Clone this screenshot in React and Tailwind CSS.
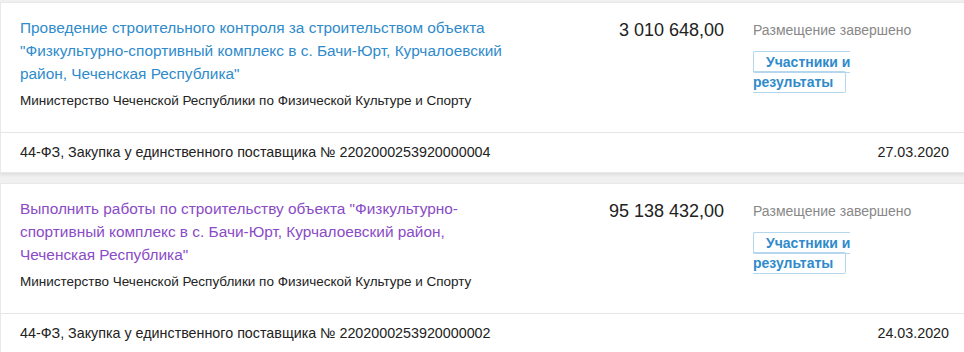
import React from 'react';

const items = [
  {
    title: 'Проведение строительного контроля за строительством объекта "Физкультурно-спортивный комплекс в с. Бачи-Юрт, Курчалоевский район, Чеченская Республика"',
    visited: false,
    org: 'Министерство Чеченской Республики по Физической Культуре и Спорту',
    price: '3 010 648,00',
    status: 'Размещение завершено',
    number: '44-ФЗ, Закупка у единственного поставщика № 2202000253920000004',
    date: '27.03.2020',
  },
  {
    title: 'Выполнить работы по строительству объекта "Физкультурно-спортивный комплекс в с. Бачи-Юрт, Курчалоевский район, Чеченская Республика"',
    visited: true,
    org: 'Министерство Чеченской Республики по Физической Культуре и Спорту',
    price: '95 138 432,00',
    status: 'Размещение завершено',
    number: '44-ФЗ, Закупка у единственного поставщика № 2202000253920000002',
    date: '24.03.2020',
  },
];

function Card({ item }) {
  return (
    <div className="w-[975px] bg-white border border-[#e8e8e8] shadow-[0_2px_3px_rgba(0,0,0,0.08)]">
      <div className="flex pl-[19px] pt-[13px] pb-[21px]">
        <div className="w-[495px]">
          <a
            className={`block text-[15.4px] leading-[23px] ${item.visited ? 'text-[#8a4bc6]' : 'text-[#2f8bcb]'}`}
          >
            {item.title}
          </a>
          <div className="mt-[6px] text-[13.5px] leading-[20px] text-[#222]">{item.org}</div>
        </div>
        <div className="w-[209px] text-right text-[18px] leading-[26px] text-[#222] pt-[1px]">
          {item.price}
        </div>
        <div className="pl-[29px] pt-[4px]">
          <div className="text-[14px] leading-[20px] text-[#888]">{item.status}</div>
          <div className="w-[112px] mt-[12px] text-[14px] leading-[20px]">
            <span className="px-[12px] py-[2px] border border-[#b5d7ee] rounded-[2px] font-bold text-[#2f8bcb]">
              Участники и результаты
            </span>
          </div>
        </div>
      </div>
      <div className="border-t border-[#e6e6e6] h-[40px] flex items-center pl-[19px] pr-[16px] w-[964px] text-[14.3px] text-[#222]">
        <div className="flex-1">{item.number}</div>
        <div>{item.date}</div>
      </div>
    </div>
  );
}

export default function App() {
  return (
    <div
      className="w-[964px] h-[352px] overflow-hidden bg-[#f0f0f0] pt-[2px] flex flex-col gap-[10px]"
      style={{ fontFamily: '"Liberation Sans", Arial, sans-serif' }}
    >
      {items.map((item, i) => (
        <Card key={i} item={item} />
      ))}
    </div>
  );
}
